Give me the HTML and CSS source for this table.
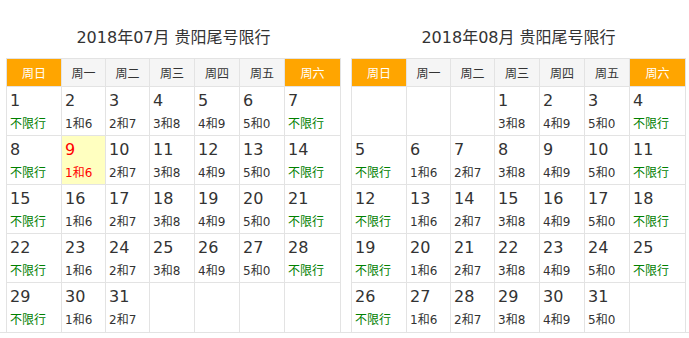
FILE: index.html
```html
<!DOCTYPE html>
<html lang="zh-CN">
<head>
<meta charset="utf-8">
<title>贵阳尾号限行</title>
<link rel="stylesheet" href="styles.css">
</head>
<body>
<div class="page">
  <section class="cal">
    <h2 class="title">2018年07月 贵阳尾号限行</h2>
    <div class="grid">
      <div class="hd wk">周日</div><div class="hd">周一</div><div class="hd">周二</div><div class="hd">周三</div><div class="hd">周四</div><div class="hd">周五</div><div class="hd wk">周六</div>
      <div class="day"><span class="n">1</span><span class="r free">不限行</span></div>
      <div class="day"><span class="n">2</span><span class="r">1和6</span></div>
      <div class="day"><span class="n">3</span><span class="r">2和7</span></div>
      <div class="day"><span class="n">4</span><span class="r">3和8</span></div>
      <div class="day"><span class="n">5</span><span class="r">4和9</span></div>
      <div class="day"><span class="n">6</span><span class="r">5和0</span></div>
      <div class="day"><span class="n">7</span><span class="r free">不限行</span></div>
      <div class="day"><span class="n">8</span><span class="r free">不限行</span></div>
      <div class="day today"><span class="n">9</span><span class="r">1和6</span></div>
      <div class="day"><span class="n">10</span><span class="r">2和7</span></div>
      <div class="day"><span class="n">11</span><span class="r">3和8</span></div>
      <div class="day"><span class="n">12</span><span class="r">4和9</span></div>
      <div class="day"><span class="n">13</span><span class="r">5和0</span></div>
      <div class="day"><span class="n">14</span><span class="r free">不限行</span></div>
      <div class="day"><span class="n">15</span><span class="r free">不限行</span></div>
      <div class="day"><span class="n">16</span><span class="r">1和6</span></div>
      <div class="day"><span class="n">17</span><span class="r">2和7</span></div>
      <div class="day"><span class="n">18</span><span class="r">3和8</span></div>
      <div class="day"><span class="n">19</span><span class="r">4和9</span></div>
      <div class="day"><span class="n">20</span><span class="r">5和0</span></div>
      <div class="day"><span class="n">21</span><span class="r free">不限行</span></div>
      <div class="day"><span class="n">22</span><span class="r free">不限行</span></div>
      <div class="day"><span class="n">23</span><span class="r">1和6</span></div>
      <div class="day"><span class="n">24</span><span class="r">2和7</span></div>
      <div class="day"><span class="n">25</span><span class="r">3和8</span></div>
      <div class="day"><span class="n">26</span><span class="r">4和9</span></div>
      <div class="day"><span class="n">27</span><span class="r">5和0</span></div>
      <div class="day"><span class="n">28</span><span class="r free">不限行</span></div>
      <div class="day"><span class="n">29</span><span class="r free">不限行</span></div>
      <div class="day"><span class="n">30</span><span class="r">1和6</span></div>
      <div class="day"><span class="n">31</span><span class="r">2和7</span></div>
      <div class="day"></div>
      <div class="day"></div>
      <div class="day"></div>
      <div class="day"></div>
    </div>
  </section>
  <section class="cal">
    <h2 class="title">2018年08月 贵阳尾号限行</h2>
    <div class="grid">
      <div class="hd wk">周日</div><div class="hd">周一</div><div class="hd">周二</div><div class="hd">周三</div><div class="hd">周四</div><div class="hd">周五</div><div class="hd wk">周六</div>
      <div class="day"></div>
      <div class="day"></div>
      <div class="day"></div>
      <div class="day"><span class="n">1</span><span class="r">3和8</span></div>
      <div class="day"><span class="n">2</span><span class="r">4和9</span></div>
      <div class="day"><span class="n">3</span><span class="r">5和0</span></div>
      <div class="day"><span class="n">4</span><span class="r free">不限行</span></div>
      <div class="day"><span class="n">5</span><span class="r free">不限行</span></div>
      <div class="day"><span class="n">6</span><span class="r">1和6</span></div>
      <div class="day"><span class="n">7</span><span class="r">2和7</span></div>
      <div class="day"><span class="n">8</span><span class="r">3和8</span></div>
      <div class="day"><span class="n">9</span><span class="r">4和9</span></div>
      <div class="day"><span class="n">10</span><span class="r">5和0</span></div>
      <div class="day"><span class="n">11</span><span class="r free">不限行</span></div>
      <div class="day"><span class="n">12</span><span class="r free">不限行</span></div>
      <div class="day"><span class="n">13</span><span class="r">1和6</span></div>
      <div class="day"><span class="n">14</span><span class="r">2和7</span></div>
      <div class="day"><span class="n">15</span><span class="r">3和8</span></div>
      <div class="day"><span class="n">16</span><span class="r">4和9</span></div>
      <div class="day"><span class="n">17</span><span class="r">5和0</span></div>
      <div class="day"><span class="n">18</span><span class="r free">不限行</span></div>
      <div class="day"><span class="n">19</span><span class="r free">不限行</span></div>
      <div class="day"><span class="n">20</span><span class="r">1和6</span></div>
      <div class="day"><span class="n">21</span><span class="r">2和7</span></div>
      <div class="day"><span class="n">22</span><span class="r">3和8</span></div>
      <div class="day"><span class="n">23</span><span class="r">4和9</span></div>
      <div class="day"><span class="n">24</span><span class="r">5和0</span></div>
      <div class="day"><span class="n">25</span><span class="r free">不限行</span></div>
      <div class="day"><span class="n">26</span><span class="r free">不限行</span></div>
      <div class="day"><span class="n">27</span><span class="r">1和6</span></div>
      <div class="day"><span class="n">28</span><span class="r">2和7</span></div>
      <div class="day"><span class="n">29</span><span class="r">3和8</span></div>
      <div class="day"><span class="n">30</span><span class="r">4和9</span></div>
      <div class="day"><span class="n">31</span><span class="r">5和0</span></div>
      <div class="day"></div>
    </div>
  </section>
</div>
</body>
</html>
```

FILE: styles.css
```css
html, body {
  margin: 0;
  padding: 0;
  background: #fff;
}

body {
  font-family: "DejaVu Sans", "Noto Sans CJK SC", sans-serif;
  color: #333;
}

.page {
  display: flex;
  gap: 10px;
  padding: 0 3px 0 6px;
  border-bottom: 1px solid #e3e3e3;
}

.cal {
  width: 335px;
}

.title {
  margin: 0;
  padding: 28px 0 10px;
  font-size: 16px;
  font-weight: normal;
  line-height: 20px;
  text-align: center;
  color: #333;
}

.grid {
  display: grid;
  grid-template-columns: 55px 44px 44px 45px 45px 45px 56px;
  grid-template-rows: 28px repeat(5, 49px);
  border-top: 1px solid #e3e3e3;
  border-left: 1px solid #e3e3e3;
}

.hd,
.day {
  box-sizing: border-box;
  border-right: 1px solid #e3e3e3;
  border-bottom: 1px solid #e3e3e3;
}

.hd {
  display: flex;
  align-items: center;
  justify-content: center;
  background: #f5f5f5;
  font-size: 12px;
  color: #333;
}

.hd.wk {
  background: #ffa500;
  color: #fff;
}

.day {
  display: flex;
  flex-direction: column;
  padding: 4px 0 0 3px;
}

.grid .day:nth-last-child(-n+7) {
  border-bottom: 0;
}

.n {
  font-size: 16px;
  line-height: 20px;
}

.r {
  margin-top: 4px;
  font-size: 12px;
  line-height: 18px;
}

.free {
  color: #008000;
}

.today {
  background: #ffffc0;
  color: #f00;
}
```
